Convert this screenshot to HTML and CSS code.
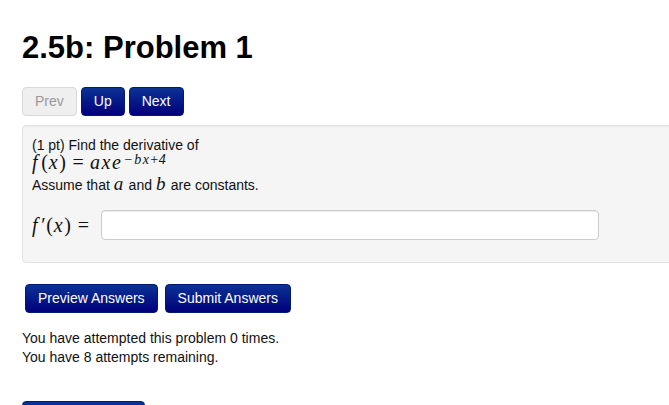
FILE: index.html
```html
<!DOCTYPE html>
<html lang="en">
<head>
    <meta charset="UTF-8">
    <meta name="viewport" content="width=device-width, initial-scale=1.0">
    <title>2.5b: Problem 1</title>
    <link rel="stylesheet" href="styles.css">
</head>
<body>
    <div class="page">
        <h1>2.5b: Problem 1</h1>

        <div class="nav">
            <a href="#" class="btn disabled">Prev</a>
            <a href="#" class="btn">Up</a>
            <a href="#" class="btn">Next</a>
        </div>

        <div class="well">
            <div class="line">(1 pt) Find the derivative of</div>
            <div class="math-line">
                <span class="m fn">f</span><span class="up">(</span><span class="m">x</span><span class="up">)</span><span class="eq">=</span><span class="m">axe</span><sup class="m">&minus;bx<span class="up">+</span>4</sup>
            </div>
            <div class="line">Assume that <span class="m var">a</span> and <span class="m var">b</span> are constants.</div>

            <div class="answer">
                <span class="label"><span class="m fn">f</span><span class="up">&prime;(</span><span class="m">x</span><span class="up">)</span><span class="eq">=</span></span>
                <input type="text" class="answer-box" value="">
            </div>
        </div>

        <div class="actions">
            <input type="submit" class="btn" value="Preview Answers">
            <input type="submit" class="btn" value="Submit Answers">
        </div>

        <div class="attempts">
            You have attempted this problem 0 times.<br>
            You have 8 attempts remaining.
        </div>

        <div class="footer">
            <a href="#" class="btn">Email Instructor</a>
        </div>
    </div>
</body>
</html>
```

FILE: styles.css
```css
html{
    overflow: hidden;
}

body{
    margin: 0;
    font-family: "Liberation Sans", Arial, sans-serif;
    font-size: 14px;
    color: #111;
    background-color: #fff;
}

.page{
    padding: 30px 0 0 22px;
}

h1{
    margin: 0;
    font-size: 31px;
    line-height: 36px;
    font-weight: bold;
    color: #000;
}

.btn{
    display: inline-block;
    padding: 5px 12px;
    font-family: "Liberation Sans", Arial, sans-serif;
    font-size: 14px;
    line-height: 17px;
    color: #fff;
    text-decoration: none;
    background: linear-gradient(to bottom, #0b3294, #00007c);
    border: 1px solid #001a6e;
    border-radius: 4px;
    cursor: pointer;
}

.btn.disabled{
    color: #999;
    background: #efefef;
    border-color: #dadada;
}

.nav{
    margin-top: 21px;
    display: flex;
    gap: 4px;
}

.well{
    margin-top: 9px;
    margin-right: -12px;
    padding: 9px 9px 22px;
    background-color: #f5f5f5;
    border: 1px solid #e3e3e3;
    border-radius: 4px;
    box-shadow: inset 0 1px 1px rgba(0, 0, 0, 0.05);
}

.line{
    line-height: 20px;
}

.m{
    font-family: "Liberation Serif", "Times New Roman", serif;
    font-style: italic;
    font-weight: normal;
    letter-spacing: 0.08em;
}

.fn{
    margin-right: 2px;
}

.up{
    font-family: "Liberation Serif", "Times New Roman", serif;
    font-style: normal;
    letter-spacing: 0.04em;
}

.eq{
    font-family: "Liberation Serif", "Times New Roman", serif;
    margin: 0 6px;
}

.math-line{
    margin: -3px 0 3px;
    height: 20px;
    line-height: 20px;
    font-size: 20px;
}

.math-line sup{
    font-size: 14px;
    vertical-align: 5px;
    line-height: 0;
    margin-left: 1px;
    letter-spacing: 0.1em;
}

.var{
    font-size: 19px;
    line-height: 0;
}

.answer{
    margin-top: 15px;
    display: flex;
    align-items: center;
    gap: 6px;
}

.answer .label{
    font-size: 20px;
    line-height: 20px;
}

.answer-box{
    width: 498px;
    height: 30px;
    box-sizing: border-box;
    padding: 4px 6px;
    font-size: 14px;
    background: #fff;
    border: 1px solid #ccc;
    border-radius: 4px;
    box-shadow: inset 0 1px 1px rgba(0, 0, 0, 0.075);
}

.actions{
    margin: 21px 0 0 3px;
    display: flex;
    gap: 7px;
}

.attempts{
    margin-top: 16px;
    line-height: 19px;
}

.footer{
    margin-top: 34px;
}
```
